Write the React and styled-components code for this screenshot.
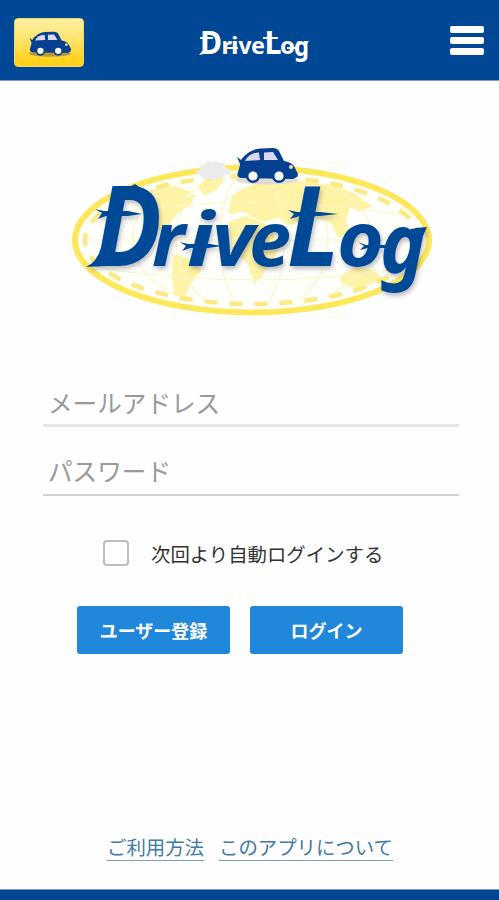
import React from 'react';
import styled, { createGlobalStyle } from 'styled-components';

const GlobalStyle = createGlobalStyle`
  * {
    box-sizing: border-box;
  }
  body {
    margin: 0;
    background-color: #fefefe;
    font-family: "Liberation Sans", "Noto Sans CJK JP", sans-serif;
  }
`;

const Page = styled.div`
  display: flex;
  flex-direction: column;
  height: 900px;
  overflow: hidden;
`;

const Header = styled.header`
  display: flex;
  align-items: center;
  justify-content: space-between;
  flex: none;
  height: 81px;
  padding: 4px 15px 0 14px;
  background-color: #004896;
  border-bottom: 1px solid #8795c4;
`;

const CarButton = styled.button`
  display: flex;
  width: 70px;
  height: 49px;
  padding: 12px 0 0 13px;
  border: 1px solid #f3d465;
  border-radius: 4px;
  background: linear-gradient(#fdf0a4, #ffe36a 45%, #ffd21c 90%);
`;

const HeaderLogo = styled.svg`
  display: block;
  width: 122px;
  height: 50px;
  margin-top: 6px;
  margin-right: 27px;
`;

const MenuButton = styled.button`
  display: flex;
  flex-direction: column;
  gap: 4px;
  padding: 0;
  margin-top: -4px;
  border: 0;
  background: none;
`;

const MenuBar = styled.span`
  width: 34px;
  height: 7px;
  border-radius: 2px;
  background-color: #fff;
`;

const Main = styled.main`
  display: flex;
  flex-direction: column;
  align-items: center;
  flex: 1;
`;

const Emblem = styled.svg`
  display: block;
  width: 380px;
  height: 190px;
  margin: 54px 0 0 9px;
`;

const LoginForm = styled.form`
  width: 416px;
  margin-top: 55px;
  margin-left: 3px;
`;

const Field = styled.input`
  display: block;
  width: 100%;
  height: ${props => props.$height};
  padding: ${props => props.$top} 5px 0;
  border: 0;
  border-bottom: ${props => props.$line};
  background: none;
  font-family: inherit;
  font-size: 24.6px;
  outline: none;

  &::placeholder {
    color: #999;
    opacity: 1;
  }
`;

const RememberLabel = styled.label`
  display: flex;
  align-items: center;
  height: 30px;
  margin: 42px 0 0 60px;
  color: #333;
  font-size: 19.4px;
`;

const Checkbox = styled.input`
  appearance: none;
  width: 26px;
  height: 26px;
  margin: 0 22px 0 0;
  border: 2px solid #bdbdbd;
  border-radius: 4px;
  background-color: #fff;
`;

const ButtonRow = styled.div`
  display: flex;
  gap: 20px;
  margin: 38px 0 0 34px;
`;

const Button = styled.button`
  width: 153px;
  height: 48px;
  padding: 0;
  border: 0;
  border-radius: 3px;
  background-color: #2187db;
  color: #fff;
  font-family: inherit;
  font-size: 18px;
  font-weight: 700;
`;

const LinkRow = styled.nav`
  display: flex;
  gap: 15px;
  margin-top: auto;
  margin-bottom: 28px;
  margin-left: 1px;
`;

const TextLink = styled.a`
  height: 28px;
  border-bottom: 1px solid #7c9fbe;
  color: #4179a8;
  font-size: 19.4px;
  line-height: 30px;
  text-decoration: none;
`;

const Footer = styled.footer`
  flex: none;
  height: 11px;
  border-top: 1px solid #8795b4;
  background-color: #004590;
`;

const CarShape = ({ shadow }) => (
  <g>
    <ellipse cx="31" cy="33" rx="31" ry="4.5" fill={shadow} />
    <path
      d="M1 10 L5 13 C9 7 16 2 24 1.5 L37 1 Q41 1 43 4 L48 14 Q55 15 58 19 Q60 23 61 25 Q63 27 61 30 L57 32 L5 31 Q0 30 2 25 Q4 19 4 17 Z"
      fill="#073f91"
    />
    <path d="M9 14 Q13 6 23 5.5 L24 13 Z" fill="#dcd9ee" />
    <path d="M28 5.5 L37 5 L42 13 L28 13 Z" fill="#dcd9ee" />
    <circle cx="17" cy="29" r="7" fill="#073f91" />
    <circle cx="43" cy="29" r="7" fill="#073f91" />
    <circle cx="17" cy="29" r="4.6" fill="#fff" />
    <circle cx="43" cy="29" r="4.6" fill="#fff" />
    <circle cx="55" cy="20" r="2" fill="#e5e29a" />
  </g>
);

const HeaderWordmark = () => (
  <HeaderLogo viewBox="194 20 122 50">
    <text fill="#fff" fontFamily="Noto Sans" fontWeight="700" fontSize="24">
      <tspan x="201" y="54" fontSize="33" textLength="22" lengthAdjust="spacingAndGlyphs">D</tspan>
      <tspan x="222.5" y="54" textLength="10.5" lengthAdjust="spacingAndGlyphs">r</tspan>
      <tspan x="232" y="54" textLength="7.5" lengthAdjust="spacingAndGlyphs">i</tspan>
      <tspan x="239.5" y="54" textLength="13" lengthAdjust="spacingAndGlyphs">v</tspan>
      <tspan x="252" y="54" textLength="14" lengthAdjust="spacingAndGlyphs">e</tspan>
      <tspan x="265.5" y="54" fontSize="33" textLength="17" lengthAdjust="spacingAndGlyphs">L</tspan>
      <tspan x="281" y="54" textLength="15" lengthAdjust="spacingAndGlyphs">o</tspan>
      <tspan x="295" y="55.5" fontSize="26" textLength="15" lengthAdjust="spacingAndGlyphs">g</tspan>
    </text>
    <path d="M201 38 H214 M228 48 H239 M264 38 H279 M288 48 H300" stroke="#fff" strokeWidth="1.8" />
    <path d="M200 55 L205 49 V54 Z M303 42 L310 41 L307 45 Z" fill="#fff" />
  </HeaderLogo>
);

const MainEmblem = () => (
  <Emblem viewBox="64 135 380 190">
    <defs>
      <clipPath id="globe">
        <ellipse cx="252" cy="240" rx="166" ry="63" />
      </clipPath>
      <filter id="soft" x="-10%" y="-10%" width="120%" height="130%">
        <feDropShadow dx="1.5" dy="3" stdDeviation="2" floodColor="#445" floodOpacity="0.35" />
      </filter>
    </defs>
    <ellipse cx="252" cy="240" rx="177" ry="72.5" fill="#fffffb" stroke="#fde85c" strokeWidth="6" />
    <g clipPath="url(#globe)">
      <g fill="#fff3a6">
        <path d="M135 190 L165 184 L180 188 L191 192 L184 198 L196 194 L190 206 L178 212 L170 224 L160 232 L148 222 L140 206 Z" />
        <path d="M198 186 L210 176 L226 178 L216 190 L204 196 Z" />
        <path d="M173 254 L188 258 L202 270 L190 284 L184 302 L174 294 L172 274 Z" />
        <path d="M232 196 L244 188 L260 182 L290 180 L332 185 L352 192 L372 206 L360 212 L350 207 L346 220 L350 232 L338 238 L330 222 L308 216 L290 226 L278 218 L262 222 L244 212 L228 214 Z" />
        <path d="M228 222 L246 216 L270 226 L280 246 L272 262 L262 276 L254 284 L248 264 L232 250 Z" />
        <path d="M340 276 L356 267 L374 270 L384 280 L362 290 L342 284 Z" />
      </g>
      <g fill="none" stroke="#fdf5c4" strokeWidth="1.2">
        <ellipse cx="252" cy="240" rx="120" ry="72" />
        <ellipse cx="252" cy="240" rx="32" ry="72" />
        <ellipse cx="252" cy="240" rx="76" ry="76" />
        <path d="M78 240 H430 M100 215 Q252 190 404 215 M100 268 Q252 292 404 268" />
      </g>
    </g>
    <ellipse
      cx="252"
      cy="240"
      rx="167"
      ry="64"
      fill="none"
      stroke="#fbea83"
      strokeWidth="4.5"
      strokeDasharray="13 12"
    />
    <path
      d="M195 172 L200 170 Q198 164 204 165 Q204 160 211 162 Q217 159 219 163 Q226 161 225 168 L232 170 L229 175 L224 174 Q226 179 219 178 Q215 182 210 179 Q203 181 201 176 Z"
      fill="#ececec"
    />
    <g transform="translate(236 147)">
      <CarShape shadow="#dfddd2" />
    </g>
    <g filter="url(#soft)" fill="#004896">
      <text fontFamily="Noto Sans" fontWeight="700" fontStyle="italic" fontSize="75">
        <tspan x="95" y="266" fontSize="111" textLength="67" lengthAdjust="spacingAndGlyphs">D</tspan>
        <tspan x="152" y="266" textLength="33" lengthAdjust="spacingAndGlyphs">r</tspan>
        <tspan x="187" y="266" textLength="27" lengthAdjust="spacingAndGlyphs">i</tspan>
        <tspan x="212" y="266" textLength="42" lengthAdjust="spacingAndGlyphs">v</tspan>
        <tspan x="249" y="266" textLength="42" lengthAdjust="spacingAndGlyphs">e</tspan>
        <tspan x="287" y="266" fontSize="111" textLength="53" lengthAdjust="spacingAndGlyphs">L</tspan>
        <tspan x="337" y="266" textLength="47" lengthAdjust="spacingAndGlyphs">o</tspan>
        <tspan x="380" y="273" fontSize="82" textLength="46" lengthAdjust="spacingAndGlyphs">g</tspan>
      </text>
      <path d="M86 267 Q97 262 101 248 L106 266 Z" />
      <path d="M124 190 L135 184 L146 192 Z" />
      <path d="M95 209 L104 211 H128 L142 214 L128 216 H106 L98 219 L102 213 Z" />
      <path d="M180 242 L188 244 H210 L222 246 L208 248 H190 L182 251 L186 246 Z" />
      <path d="M288 210 L297 212 H320 L338 214 L320 216 H300 L290 219 L294 214 Z" />
      <path d="M358 242 L366 245 H388 V248 H368 L360 250 L364 246 Z" />
      <path d="M410 229 L427 227 L423 236 H412 Z" />
    </g>
  </Emblem>
);

export const App = () => (
  <Page>
    <GlobalStyle />
    <Header>
      <CarButton type="button">
        <svg width="44" height="26" viewBox="0 0 62 38">
          <CarShape shadow="#b89a35" />
        </svg>
      </CarButton>
      <HeaderWordmark />
      <MenuButton type="button">
        <MenuBar />
        <MenuBar />
        <MenuBar />
      </MenuButton>
    </Header>
    <Main>
      <MainEmblem />
      <LoginForm>
        <Field type="text" placeholder="メールアドレス" $height="47px" $top="5px" $line="3px solid #e6e6e6" />
        <Field type="password" placeholder="パスワード" $height="69px" $top="25px" $line="2px solid #d2d2d2" />
        <RememberLabel>
          <Checkbox type="checkbox" />
          次回より自動ログインする
        </RememberLabel>
        <ButtonRow>
          <Button type="button">ユーザー登録</Button>
          <Button type="button">ログイン</Button>
        </ButtonRow>
      </LoginForm>
      <LinkRow>
        <TextLink>ご利用方法</TextLink>
        <TextLink>このアプリについて</TextLink>
      </LinkRow>
    </Main>
    <Footer />
  </Page>
);

export default App;
